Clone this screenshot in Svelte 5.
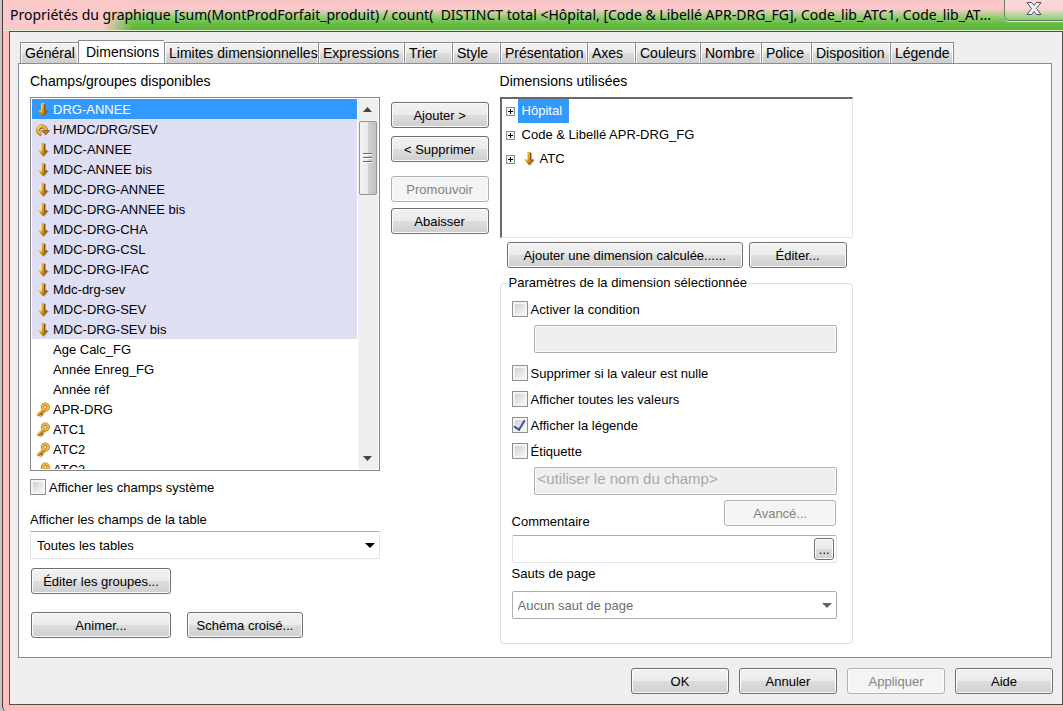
<script>
  const tabs = [
    { label: 'Général', width: 58 },
    { label: 'Dimensions', width: 86 },
    { label: 'Limites dimensionnelles', width: 154 },
    { label: 'Expressions', width: 86 },
    { label: 'Trier', width: 48 },
    { label: 'Style', width: 48 },
    { label: 'Présentation', width: 87 },
    { label: 'Axes', width: 48 },
    { label: 'Couleurs', width: 65 },
    { label: 'Nombre', width: 61 },
    { label: 'Police', width: 50 },
    { label: 'Disposition', width: 79 },
    { label: 'Légende', width: 64 }
  ];

  const fields = [
    { name: 'DRG-ANNEE', icon: 'arrow' },
    { name: 'H/MDC/DRG/SEV', icon: 'cycle' },
    { name: 'MDC-ANNEE', icon: 'arrow' },
    { name: 'MDC-ANNEE bis', icon: 'arrow' },
    { name: 'MDC-DRG-ANNEE', icon: 'arrow' },
    { name: 'MDC-DRG-ANNEE bis', icon: 'arrow' },
    { name: 'MDC-DRG-CHA', icon: 'arrow' },
    { name: 'MDC-DRG-CSL', icon: 'arrow' },
    { name: 'MDC-DRG-IFAC', icon: 'arrow' },
    { name: 'Mdc-drg-sev', icon: 'arrow' },
    { name: 'MDC-DRG-SEV', icon: 'arrow' },
    { name: 'MDC-DRG-SEV bis', icon: 'arrow' },
    { name: 'Age Calc_FG' },
    { name: 'Année Enreg_FG' },
    { name: 'Année réf' },
    { name: 'APR-DRG', icon: 'key' },
    { name: 'ATC1', icon: 'key' },
    { name: 'ATC2', icon: 'key' },
    { name: 'ATC3', icon: 'key' }
  ];

  const used = [
    { name: 'Hôpital' },
    { name: 'Code & Libellé APR-DRG_FG' },
    { name: 'ATC', icon: 'arrow' }
  ];

  let activeTab = $state('Dimensions');
  let selected = $state('DRG-ANNEE');
  let selectedDim = $state('Hôpital');
  let systemFields = $state(false);
  let condition = $state(false);
  let suppressNull = $state(false);
  let showAll = $state(false);
  let showLegend = $state(true);
  let hasLabel = $state(false);
  let comment = $state('');
</script>

{#snippet icon(type)}
  {#if type === 'arrow'}
    <svg class="icon" width="14" height="16" viewBox="0 0 14 16" aria-hidden="true">
      <path d="M6.500 2H10v7h3l-5 6-4-4z" fill="#77705c" opacity=".55" />
      <path d="M5 1h4v7.500h3L7 14 2 8.500h3z" fill="url(#gold)" />
      <path d="M8.500 2v7H11L7 13.300" fill="none" stroke="#85500c" />
      <path d="M5.500 1.500V9H3.500" fill="none" stroke="#f8dc58" />
    </svg>
  {:else if type === 'cycle'}
    <svg class="icon" width="14" height="16" viewBox="0 0 14 16" aria-hidden="true">
      <path d="M5.500 12A3.800 3.800 0 1 1 9.800 8.500" fill="none" stroke="#7b5a1c" stroke-width="4" />
      <path d="M5.500 11.500A3.800 3.800 0 1 1 9.500 8" fill="none" stroke="#e8b429" stroke-width="3" />
      <path d="M1.800 7.500A4 4 0 0 1 5 3.800" fill="none" stroke="#fff08a" />
      <path d="M5.500 8.500h8.500L9.700 13z" fill="#b8741c" stroke="#75480c" stroke-width=".5" />
    </svg>
  {:else if type === 'key'}
    <svg class="icon" width="14" height="16" viewBox="0 0 14 16" aria-hidden="true">
      <path d="M9 9 3.500 14.500M5 12.500l2 1.500" stroke="#b5b0a4" stroke-width="3" opacity=".8" />
      <path d="M8 7.500 1.500 13.500M4.500 11l2 2" fill="none" stroke="#b37512" stroke-width="3" />
      <circle cx="9.300" cy="5" r="2.800" fill="none" stroke="#b37512" stroke-width="3.500" />
      <circle cx="9.300" cy="4.700" r="2.800" fill="none" stroke="#edb545" stroke-width="2.200" />
      <path d="M7.500 7 1.300 12.800" stroke="#f2c35a" stroke-width="1.300" />
    </svg>
  {:else}
    <span class="icon"></span>
  {/if}
{/snippet}

<svg class="defs" width="0" height="0" aria-hidden="true">
  <defs>
    <linearGradient id="gold" x1="0" y1="0" x2="1" y2="1">
      <stop offset="0" stop-color="#f5cf3c" />
      <stop offset=".5" stop-color="#dc9a1c" />
      <stop offset="1" stop-color="#8a5208" />
    </linearGradient>
  </defs>
</svg>

<div class="window">
  <header>
    <h1>Propriétés du graphique [sum(MontProdForfait_produit) / count(&nbsp; DISTINCT total &lt;Hôpital, [Code &amp; Libellé APR-DRG_FG], Code_lib_ATC1, Code_lib_AT...</h1>
    <button class="close" aria-label="Fermer">
      <svg width="18" height="16" viewBox="0 0 18 16" aria-hidden="true">
        <path d="M2 1.500h4.500L9 4.500l2.500-3H16L11.500 7.500l4.500 6h-4.500L9 10.500l-2.500 3H2l4.500-6z" fill="#f4f4f4" stroke="#4d5068" stroke-linejoin="round" />
      </svg>
    </button>
  </header>

  <main>
    <div class="tabs" role="tablist">
      {#each tabs as tab}
        <button
          class="tab"
          class:active={activeTab === tab.label}
          role="tab"
          aria-selected={activeTab === tab.label}
          style="width: {tab.width}px"
          onclick={() => (activeTab = tab.label)}>{tab.label}</button>
      {/each}
    </div>

    <div class="panel">
      <section class="available">
        <h2 id="available">Champs/groupes disponibles</h2>
        <div class="listbox">
          <ul role="listbox" aria-labelledby="available">
            {#each fields as field}
              <li
                role="option"
                tabindex="-1"
                aria-selected={selected === field.name}
                class:group={field.icon && field.icon !== 'key'}
                class:selected={selected === field.name}
                onclick={() => (selected = field.name)}
                onkeydown={() => {}}>
                {@render icon(field.icon)}
                <span>{field.name}</span>
              </li>
            {/each}
          </ul>
          <div class="scrollbar">
            <svg width="9" height="5" viewBox="0 0 9 5" aria-hidden="true"><path d="M0 5 4.500 0 9 5z" fill="#444" /></svg>
            <div class="thumb"><i></i><i></i><i></i></div>
            <svg class="down" width="9" height="5" viewBox="0 0 9 5" aria-hidden="true"><path d="M0 0h9L4.500 5z" fill="#444" /></svg>
          </div>
        </div>

        <label class="check system"><input type="checkbox" bind:checked={systemFields} /><span>Afficher les champs système</span></label>

        <label class="line" for="table">Afficher les champs de la table</label>
        <div class="combo">
          <select id="table">
            <option>Toutes les tables</option>
          </select>
          <svg width="10" height="5" viewBox="0 0 10 5" aria-hidden="true"><path d="M0 0h10L5 5z" fill="#000" /></svg>
        </div>

        <div class="actions">
          <button class="btn wide">Éditer les groupes...</button>
          <div class="pair">
            <button class="btn wide">Animer...</button>
            <button class="btn medium">Schéma croisé...</button>
          </div>
        </div>
      </section>

      <div class="move">
        <button class="btn">Ajouter &gt;</button>
        <button class="btn">&lt; Supprimer</button>
        <button class="btn promote" disabled>Promouvoir</button>
        <button class="btn">Abaisser</button>
      </div>

      <section class="used">
        <h2 id="used">Dimensions utilisées</h2>
        <ul class="tree" role="tree" aria-labelledby="used">
          {#each used as dim}
            <li role="treeitem" aria-selected={selectedDim === dim.name}>
              <button class="expand" aria-label="Développer {dim.name}"></button>
              <button class="dim" class:selected={selectedDim === dim.name} onclick={() => (selectedDim = dim.name)}>
                {#if dim.icon}{@render icon(dim.icon)}{/if}{dim.name}
              </button>
            </li>
          {/each}
        </ul>
        <div class="dim-actions">
          <button class="btn calc">Ajouter une dimension calculée......</button>
          <button class="btn">Éditer...</button>
        </div>

        <fieldset>
          <legend>Paramètres de la dimension sélectionnée</legend>
          <label class="check"><input type="checkbox" bind:checked={condition} /><span>Activer la condition</span></label>
          <input class="text indent" type="text" aria-label="Condition" disabled={!condition} />
          <div class="checks">
            <label class="check"><input type="checkbox" bind:checked={suppressNull} /><span>Supprimer si la valeur est nulle</span></label>
            <label class="check"><input type="checkbox" bind:checked={showAll} /><span>Afficher toutes les valeurs</span></label>
            <label class="check"><input type="checkbox" bind:checked={showLegend} /><span>Afficher la légende</span></label>
            <label class="check"><input type="checkbox" bind:checked={hasLabel} /><span>Étiquette</span></label>
          </div>
          <input class="text indent label" type="text" aria-label="Étiquette" placeholder="<utiliser le nom du champ>" disabled={!hasLabel} />
          <div class="comment-row">
            <label class="line" for="comment">Commentaire</label>
            <button class="btn advanced" disabled>Avancé...</button>
          </div>
          <div class="comment">
            <input id="comment" type="text" bind:value={comment} />
            <button class="btn more">...</button>
          </div>
          <label class="line" for="breaks">Sauts de page</label>
          <div class="combo breaks">
            <select id="breaks" disabled>
              <option>Aucun saut de page</option>
            </select>
            <svg width="10" height="5" viewBox="0 0 10 5" aria-hidden="true"><path d="M0 0h10L5 5z" fill="#666" /></svg>
          </div>
        </fieldset>
      </section>
    </div>

    <footer>
      <button class="btn">OK</button>
      <button class="btn">Annuler</button>
      <button class="btn" disabled>Appliquer</button>
      <button class="btn">Aide</button>
    </footer>
  </main>
</div>

<style>
  :global(body) {
    background: #c9c4c6;
  }
  .window,
  .window * {
    box-sizing: border-box;
  }
  .window {
    display: flex;
    flex-direction: column;
    min-height: 100vh;
    margin-left: 2px;
    padding: 0 0 7px 6px;
    border-left: 1px solid #4b3a3c;
    border-bottom-left-radius: 6px;
    background: #ffbfc0;
    font: 13px/16px 'Liberation Sans', Arial, sans-serif;
    color: #000;
  }
  .defs {
    position: absolute;
  }
  button,
  select,
  input {
    font: inherit;
    color: inherit;
    margin: 0;
  }
  h1,
  h2,
  ul {
    margin: 0;
    padding: 0;
    font-weight: normal;
    list-style: none;
  }

  header {
    display: flex;
    align-items: flex-start;
    height: 31px;
    margin-left: -6px;
    padding-left: 7px;
    border-bottom: 1px solid #dff0cf;
    background:
      linear-gradient(90deg, #fbc9c9 100px, transparent 130px),
      linear-gradient(#f9c6c8 0, #fbc9c9 9px, #8fcf74 17px, #66bb42 24px, #5cb636 100%);
  }
  h1 {
    flex: 1;
    min-width: 0;
    overflow: hidden;
    font: 14px/30px 'Noto Sans', 'Open Sans', sans-serif;
    white-space: nowrap;
  }
  .close {
    display: flex;
    flex: none;
    justify-content: center;
    width: 59px;
    height: 21px;
    padding: 1px 0 0;
    border: 1px solid #6f7a68;
    border-top: 0;
    border-right: 0;
    border-radius: 0 0 0 5px;
    background: linear-gradient(rgba(255, 255, 255, 0.3), rgba(255, 255, 255, 0.1));
    box-shadow: 0 1px 0 #d8ecc8;
  }

  main {
    display: flex;
    flex: 1;
    flex-direction: column;
    padding: 8px 10px 10px 8px;
    border: 1px solid #5b4a4a;
    background: #efefef;
  }
  .tabs {
    display: flex;
    align-items: flex-end;
    height: 24px;
    margin-bottom: -1px;
    padding-left: 2px;
  }
  .tab {
    flex: none;
    height: 22px;
    padding: 0 0 0 4px;
    border: 1px solid #898c95;
    border-right: 0;
    background: linear-gradient(#f3f3f3, #ebebeb 50%, #dcdcdc 51%, #cdcdcd);
    box-shadow: inset 1px 1px 0 #fff, inset -1px 0 0 #fff;
    font-size: 14px;
    text-align: left;
    white-space: nowrap;
  }
  .tab:last-child {
    border-right: 1px solid #898c95;
  }
  .tab.active {
    height: 24px;
    padding: 0 0 2px 7px;
    border-bottom: 0;
    background: #fff;
  }
  .panel {
    display: grid;
    flex: 1;
    grid-template-columns: 350fr 98px 354fr 187fr;
    column-gap: 11px;
    padding: 9px 0 13px 11px;
    border: 1px solid #898c95;
    background: #fff;
  }
  h2 {
    margin-bottom: 8px;
    font-size: 14px;
    line-height: 16px;
  }

  .listbox {
    display: flex;
    height: 374px;
    padding: 1px;
    border: 1px solid #828790;
  }
  .listbox ul {
    flex: 1;
    overflow: hidden;
  }
  .listbox li {
    display: flex;
    align-items: center;
    height: 20px;
    padding: 2px 0 0 4px;
  }
  .listbox li .icon {
    flex: none;
    width: 14px;
    margin-right: 3px;
  }
  .listbox .group {
    background: #dfdff4;
  }
  .listbox li.selected,
  .dim.selected {
    background: #3399ff;
    color: #fff;
  }
  .scrollbar {
    display: flex;
    flex-direction: column;
    align-items: center;
    width: 21px;
    padding: 8px 1px;
    border-left: 1px solid #fff;
    background: #efefef;
  }
  .scrollbar svg {
    flex: none;
  }
  .thumb {
    display: flex;
    flex-direction: column;
    align-items: center;
    justify-content: center;
    gap: 2px;
    width: 18px;
    height: 74px;
    margin-top: 9px;
    border: 1px solid #979797;
    border-radius: 2px;
    background: linear-gradient(90deg, #f5f5f5, #e9e9eb 50%, #d0d0d3 51%, #c2c2c6);
  }
  .thumb i {
    width: 9px;
    height: 2px;
    border-bottom: 1px solid #fff;
    background: #666;
  }
  .down {
    margin-top: auto;
  }

  .check {
    display: flex;
    align-items: center;
    gap: 3px;
    height: 16px;
  }
  .check span {
    padding-top: 2px;
  }
  .check input {
    display: flex;
    flex: none;
    justify-content: center;
    width: 16px;
    height: 16px;
    border: 1px solid #8e8f8f;
    background: linear-gradient(135deg, #c6cad0, #f3f4f5 80%);
    box-shadow: inset 0 0 0 2px #f4f4f4;
    appearance: none;
  }
  .check input:checked::before {
    content: '';
    width: 5px;
    height: 10px;
    border: solid #3f5294;
    border-width: 0 2px 2px 0;
    transform: rotate(32deg);
  }
  .system {
    margin: 8px 0 16px;
  }
  .line {
    display: block;
    line-height: 18px;
    height: 16px;
  }
  .combo {
    display: flex;
    align-items: center;
    margin-top: 4px;
  }
  .combo select {
    flex: 1;
    height: 28px;
    padding: 2px 6px 0;
    border: 1px solid #e2e3ea;
    border-top-color: #abadb3;
    border-radius: 1px;
    background: #fff;
    appearance: none;
  }
  .combo svg {
    margin: 0 5px 0 -15px;
    pointer-events: none;
  }
  .combo select:disabled {
    padding: 2px 5px 0;
    border-color: #adadad;
    border-radius: 2px;
    color: #6d6d6d;
    opacity: 1;
  }
  .breaks {
    margin-top: 10px;
  }

  .btn {
    flex: none;
    width: 98px;
    height: 26px;
    padding: 2px 0 0;
    border: 1px solid #707070;
    border-radius: 3px;
    background: linear-gradient(#f2f2f2, #ebebeb 49%, #dddddd 50%, #cfcfcf);
    box-shadow: inset 0 0 0 1px #fbfbfb;
    white-space: nowrap;
  }
  .btn:disabled {
    border-color: #adb2b5;
    background: #f4f4f4;
    color: #838383;
  }
  .btn.wide {
    width: 140px;
  }
  .btn.medium {
    width: 116px;
  }
  .actions {
    display: flex;
    flex-direction: column;
    gap: 18px;
    margin-top: 9px;
    padding-left: 1px;
  }
  .pair {
    display: flex;
    gap: 16px;
  }
  .move {
    display: flex;
    flex-direction: column;
    gap: 8px;
    padding-top: 29px;
  }
  .move .promote {
    margin: 6px 0 -2px;
  }

  .tree {
    height: 141px;
    padding: 0 0 0 4px;
    border: 1px solid #e3e3e3;
    border-top: 2px solid #696969;
    border-left: 2px solid #696969;
  }
  .tree li {
    display: flex;
    align-items: center;
    gap: 3px;
    height: 24px;
  }
  .expand {
    width: 9px;
    height: 9px;
    padding: 0;
    border: 1px solid #848f9c;
    background:
      linear-gradient(#000, #000) center / 5px 1px no-repeat,
      linear-gradient(#000, #000) center / 1px 5px no-repeat,
      #f2f2f2;
  }
  .dim {
    display: flex;
    align-items: center;
    gap: 4px;
    height: 24px;
    padding: 0 7px 0 4px;
    border: 0;
    background: none;
  }
  .dim-actions {
    display: flex;
    gap: 6px;
    margin-top: 4px;
    padding-left: 7px;
  }
  .btn.calc {
    width: 236px;
  }

  fieldset {
    display: flex;
    flex-direction: column;
    min-width: 0;
    margin: 7px 0 0;
    padding: 10px 15px 24px 11px;
    border: 1px solid #d5dfe5;
    border-radius: 4px;
  }
  legend {
    margin-left: -5px;
    padding: 0 2px;
    line-height: 16px;
  }
  .text {
    height: 28px;
    padding: 0 3px 6px;
    border: 1px solid #afafaf;
    border-radius: 2px;
    background: #fff;
  }
  .text:disabled {
    background: #efefef;
    box-shadow: inset 0 0 0 1px #fafafa;
  }
  .text::placeholder {
    color: #a8a8a8;
    opacity: 1;
  }
  .indent {
    margin: 8px 0 0 22px;
  }
  .label {
    font-size: 15px;
  }
  .checks {
    display: flex;
    flex-direction: column;
    gap: 10px;
    margin-top: 12px;
  }
  .comment-row {
    display: flex;
    align-items: flex-end;
    justify-content: space-between;
    margin-top: 5px;
    padding-right: 1px;
  }
  .btn.advanced {
    width: 112px;
    margin-bottom: 3px;
  }
  .comment {
    display: flex;
    align-items: center;
    height: 28px;
    margin: 6px 0 2px;
    padding: 0 2px;
    border: 1px solid #e2e3ea;
    border-top-color: #abadb3;
    border-radius: 2px;
  }
  .comment input {
    flex: 1;
    min-width: 0;
    border: 0;
    outline: 0;
  }
  .btn.more {
    width: 20px;
    height: 22px;
  }
  footer {
    display: flex;
    justify-content: flex-end;
    gap: 10px;
    margin: 10px -1px 0 0;
  }
</style>
